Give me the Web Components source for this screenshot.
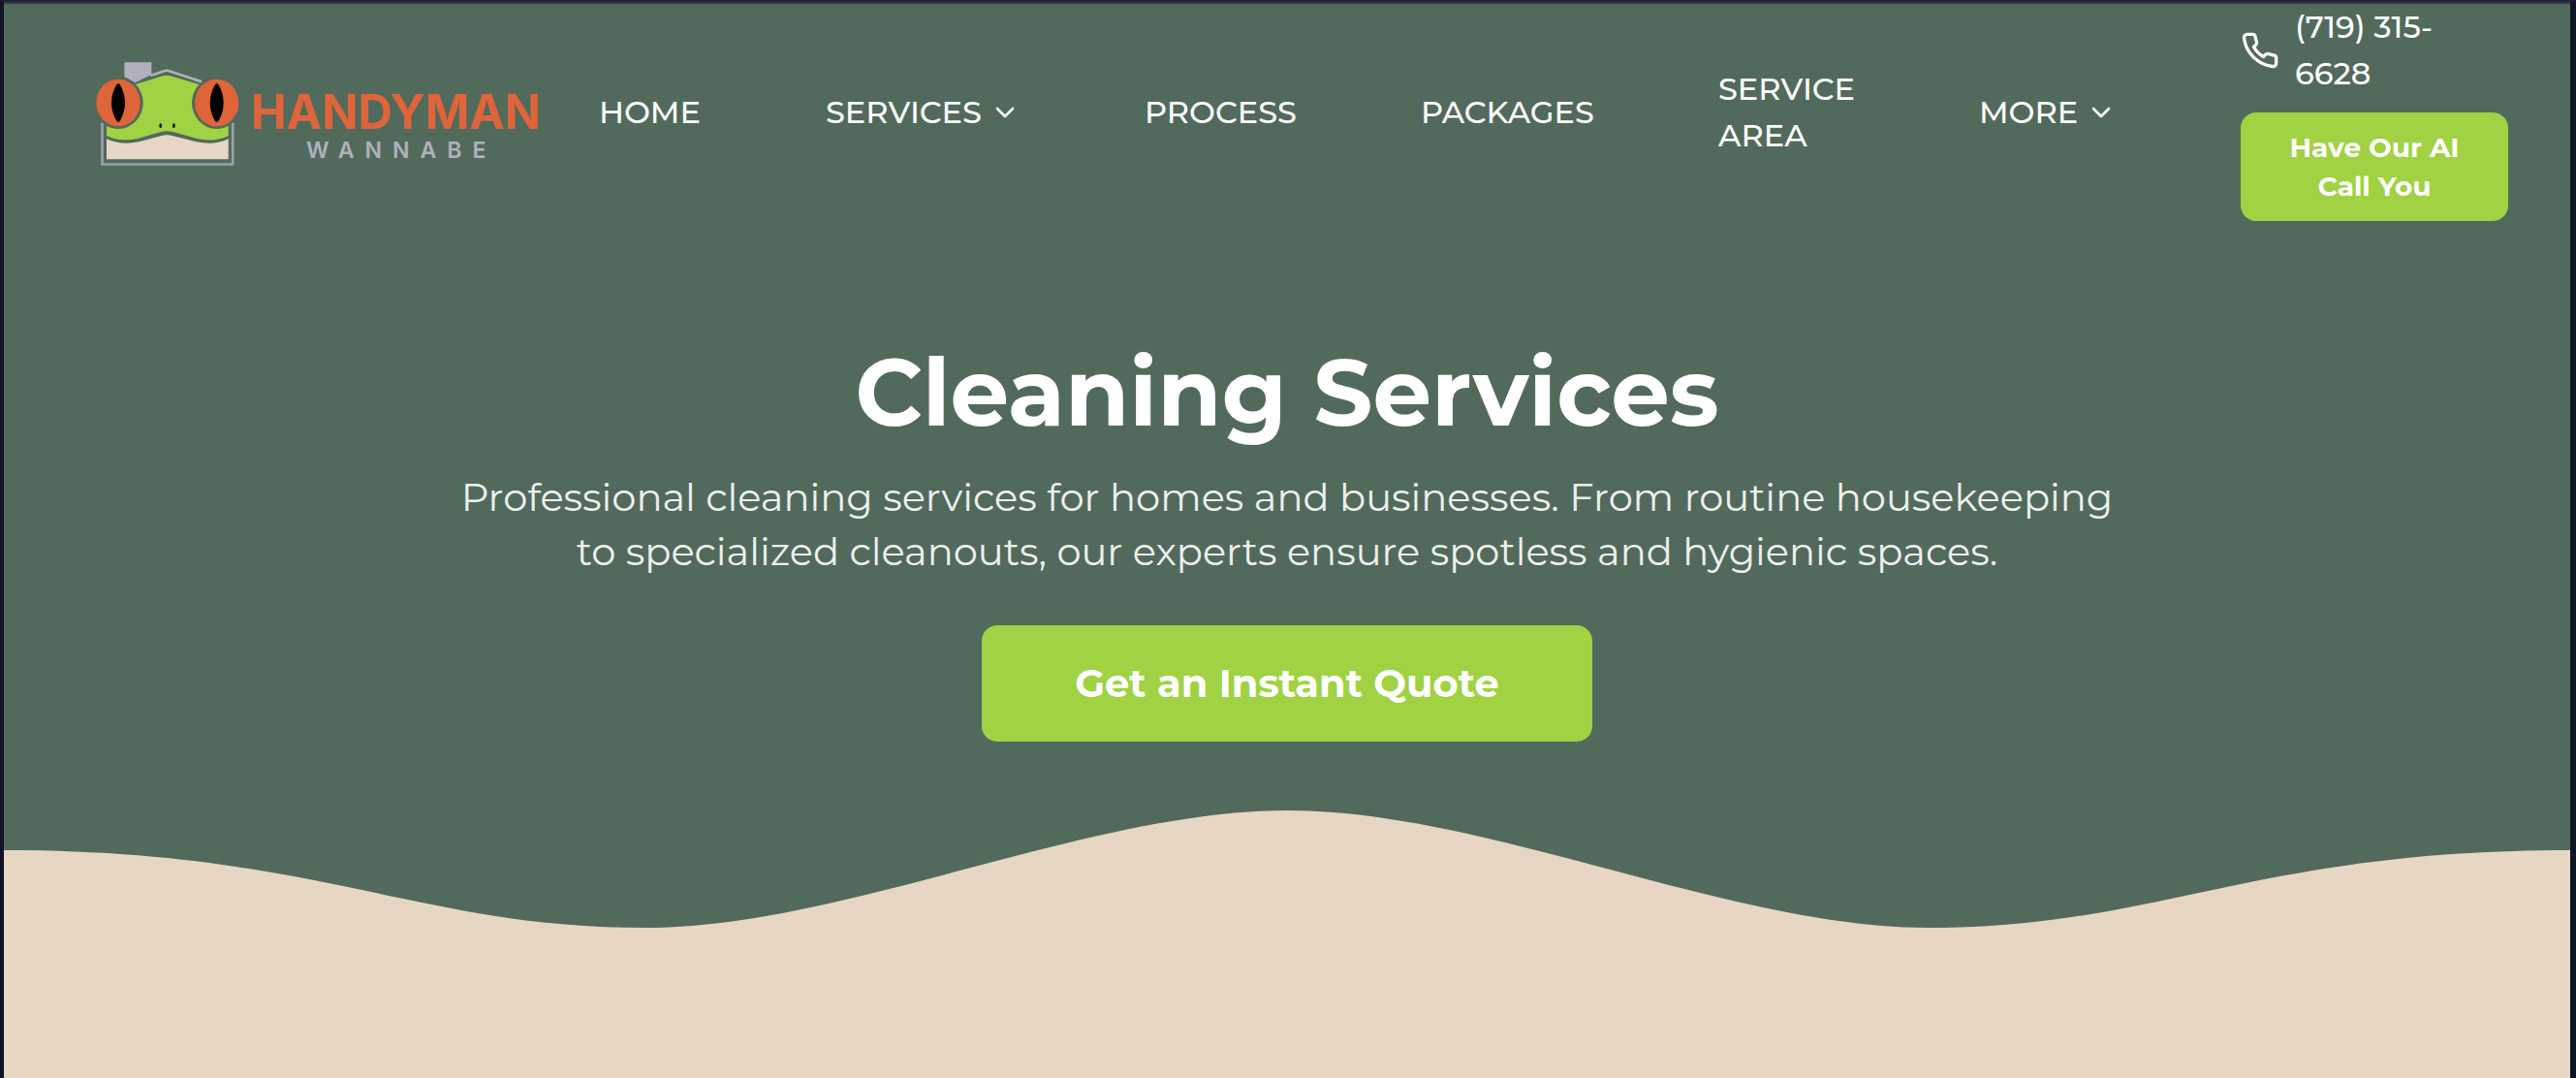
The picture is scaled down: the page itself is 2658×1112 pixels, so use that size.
<!DOCTYPE html>
<html lang="en">
<head>
<meta charset="utf-8">
<title>Cleaning Services | Handyman Wannabe</title>
<style>
  :root {
    --green: #516a5c;
    --lime: #a0d243;
    --sand: #e7d6c4;
    --orange: #e06439;
    --silver: #b1b0bc;
  }
  * { box-sizing: border-box; }
  body {
    margin: 0;
    min-height: 100vh;
    background: var(--sand);
    color: #fff;
    font-family: Montserrat, Inter, sans-serif;
    border-style: solid;
    border-color: #1f2335 #0e1525 #0e1525 #0f1324;
    border-width: 2px 6px 0 4px;
  }
</style>
</head>
<body>
<site-page>
  <site-header slot="header">
    <brand-logo slot="logo"></brand-logo>
    <nav-item href="#home">HOME</nav-item>
    <nav-item href="#services" menu>SERVICES</nav-item>
    <nav-item href="#process">PROCESS</nav-item>
    <nav-item href="#packages">PACKAGES</nav-item>
    <nav-item href="#area">SERVICE AREA</nav-item>
    <nav-item href="#more" menu>MORE</nav-item>
    <phone-link slot="contact" href="tel:+17193156628">(719) 315-6628</phone-link>
    <action-button slot="contact">Have Our AI Call You</action-button>
  </site-header>
  <page-hero>
    <span slot="title">Cleaning Services</span>
    <span slot="lead">Professional cleaning services for homes and businesses. From routine housekeeping to specialized cleanouts, our experts ensure spotless and hygienic spaces.</span>
    <action-button slot="action" large>Get an Instant Quote</action-button>
  </page-hero>
</site-page>

<script>
const define = (name, html, setup) => {
  const template = document.createElement('template');
  template.innerHTML = '<style>*{box-sizing:border-box}</style>' + html;
  customElements.define(name, class extends HTMLElement {
    connectedCallback() {
      if (this.shadowRoot) return;
      this.attachShadow({ mode: 'open' }).append(template.content.cloneNode(true));
      if (setup) setup(this, this.shadowRoot);
    }
  });
};

define('site-page', `
  <style>
    :host { display: block; border-top: 2px solid #333a4e; }
    .top { background: var(--green); }
  </style>
  <div class="top"><slot name="header"></slot><slot></slot></div>`);

define('site-header', `
  <style>
    header {
      display: grid;
      grid-template-columns: 522px minmax(0, 1fr) 276px;
      align-items: center;
      padding: 0 64px 0 92px;
    }
    nav {
      display: grid;
      grid-template-columns:
        minmax(0, 106fr) minmax(0, 201fr) minmax(0, 157fr)
        minmax(0, 179fr) minmax(0, 141fr) minmax(0, 142fr);
      column-gap: 128px;
      align-items: center;
      padding-right: 128px;
    }
    .contact { display: flex; flex-direction: column; gap: 16px; }
  </style>
  <header>
    <slot name="logo"></slot>
    <nav aria-label="Main"><slot></slot></nav>
    <div class="contact"><slot name="contact"></slot></div>
  </header>`);

define('brand-logo', `
  <style>
    :host { display: block; }
    a { display: flex; align-items: center; gap: 10px; color: inherit; text-decoration: none; }
    svg { width: 153px; height: 112px; flex: none; }
    .words { display: flex; flex-direction: column; align-items: center; padding-top: 30px; font-family: Inter, sans-serif; }
    .name { color: var(--orange); font-size: 49px; line-height: 48px; font-weight: 700; }
    .sub { color: var(--silver); font-size: 23px; line-height: 30px; font-weight: 600; letter-spacing: 11px; padding-left: 11px; }
  </style>
  <a href="#home">
    <svg viewBox="18 15 459 336" aria-hidden="true">
      <path d="M46.500 214V343.500H450.500V214" fill="none" stroke="#9ca0aa" stroke-width="8"/>
      <path d="M115 28H199V66L148 91L115 73Z" fill="#b1b0bc"/>
      <path d="M196 69L238 54.500Q246 52 254 54.500L354 88" fill="none" stroke="#b1b0bc" stroke-width="8"/>
      <path d="M60 96H150L234 70Q246 66 258 70L345 96H437V255Q395 276 340 264L268 244Q247 237 226 244L156 264Q100 275 60 255Z" fill="#a0d243"/>
      <path d="M60 265Q105 286 160 274L228 256Q247 250 266 256L338 274Q395 286 437 265V328H60Z" fill="#e7d6c4"/>
      <path d="M18 92H146L130 140H18ZM477 92H351L365 140H477Z" fill="#516a5c"/>
      <path d="M36 150H60V214H36ZM437 150H461V214H437Z" fill="#516a5c"/>
      <ellipse cx="96" cy="153" rx="77" ry="81" fill="#516a5c"/>
      <ellipse cx="401" cy="153" rx="77" ry="81" fill="#516a5c"/>
      <path d="M330 80L354 88" fill="none" stroke="#b1b0bc" stroke-width="8"/>
      <ellipse cx="96" cy="153" rx="68" ry="73" fill="#e06439"/>
      <ellipse cx="401" cy="153" rx="68" ry="73" fill="#e06439"/>
      <path d="M90 98Q96 88 102 98Q117 124 117 153T102 208Q96 218 90 208Q75 182 75 153T90 98Z"/>
      <path d="M395 98Q401 88 407 98Q422 124 422 153T407 208Q401 218 395 208Q380 182 380 153T395 98Z"/>
      <ellipse cx="227" cy="224" rx="4" ry="7"/>
      <ellipse cx="268" cy="224" rx="4" ry="7"/>
    </svg>
    <span class="words"><span class="name">HANDYMAN</span><span class="sub">WANNABE</span></span>
  </a>`);

define('nav-item', `
  <style>
    :host { display: block; }
    a { display: flex; align-items: center; gap: 8px; color: inherit; text-decoration: none;
        font-size: 32px; line-height: 48px; font-weight: 500; }
    svg { display: none; width: 32px; height: 32px; flex: none; }
    :host([menu]) svg { display: block; }
  </style>
  <a><span><slot></slot></span>
    <svg viewBox="0 0 24 24" fill="none" stroke="currentColor" stroke-width="2" stroke-linecap="round" stroke-linejoin="round" aria-hidden="true"><path d="m6 9 6 6 6-6"/></svg>
  </a>`, (host, root) => { root.querySelector('a').href = host.getAttribute('href'); });

define('phone-link', `
  <style>
    :host { display: block; }
    a { display: flex; align-items: center; gap: 16px; padding-right: 48px; color: inherit; text-decoration: none;
        font-size: 32px; line-height: 48px; font-weight: 500; }
    svg { width: 40px; height: 40px; flex: none; }
  </style>
  <a>
    <svg viewBox="0 0 24 24" fill="none" stroke="currentColor" stroke-width="2" stroke-linecap="round" stroke-linejoin="round" aria-hidden="true"><path d="M22 16.920v3a2 2 0 0 1-2.180 2 19.790 19.790 0 0 1-8.630-3.070 19.500 19.500 0 0 1-6-6 19.790 19.790 0 0 1-3.070-8.670A2 2 0 0 1 4.110 2h3a2 2 0 0 1 2 1.720 12.840 12.840 0 0 0 .7 2.810 2 2 0 0 1-.45 2.110L8.090 9.910a16 16 0 0 0 6 6l1.270-1.270a2 2 0 0 1 2.110-.45 12.840 12.840 0 0 0 2.810.7A2 2 0 0 1 22 16.920z"/></svg>
    <span><slot></slot></span>
  </a>`, (host, root) => { root.querySelector('a').href = host.getAttribute('href'); });

define('action-button', `
  <style>
    :host { display: block; }
    button { width: 100%; margin: 0; border: 0; border-radius: 16px; padding: 16px 32px; background: var(--lime); color: #fff;
             font-family: inherit; font-size: 28px; line-height: 40px; font-weight: 700; cursor: pointer; }
    :host([large]) button { padding: 32px 96px; font-size: 40px; line-height: 56px; }
  </style>
  <button type="button"><slot></slot></button>`);

define('page-hero', `
  <style>
    section { display: flex; flex-direction: column; align-items: center; padding-top: 129px; text-align: center; }
    h1 { margin: 0 0 32px; font-size: 96px; line-height: 96px; font-weight: 700; }
    p { margin: 0 0 48px; max-width: 1728px; font-size: 40px; line-height: 56px; color: #eef0ee; }
    svg { display: block; width: 100%; height: 121px; margin-top: 71px; }
  </style>
  <section>
    <h1><slot name="title"></slot></h1>
    <p><slot name="lead"></slot></p>
    <slot name="action"></slot>
    <svg viewBox="0 0 2648 121" preserveAspectRatio="none" aria-hidden="true">
      <path fill="#e7d6c4" d="M0 41C325 41 425 121 662 121C867 121 1117 0 1324 0C1531 0 1781 121 1986 121C2223 121 2323 41 2648 41V122H0Z"/>
    </svg>
  </section>`);
</script>
</body>
</html>
